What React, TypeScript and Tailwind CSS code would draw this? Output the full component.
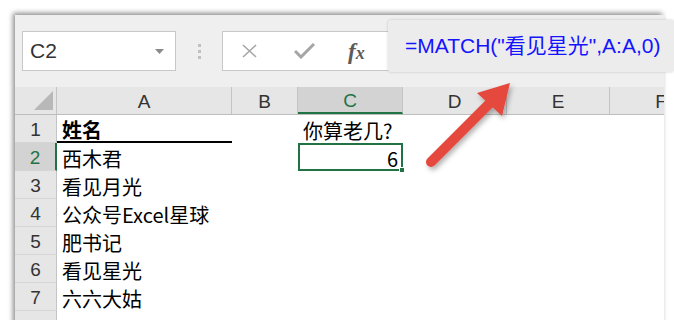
import React from "react";

const cols = [
  { key: "A", w: "w-[175px]" },
  { key: "B", w: "w-[66px]" },
  { key: "C", w: "w-[105px]" },
  { key: "D", w: "w-[104px]" },
  { key: "E", w: "w-[103px]" },
  { key: "F", w: "w-[103px]" },
];

const names = ["西木君", "看见月光", "公众号Excel星球", "肥书记", "看见星光", "六六大姑"];

const latin = "font-['Liberation_Sans','Noto_Sans_CJK_SC',sans-serif]";
const cjk = "font-['Noto_Sans_CJK_SC',sans-serif]";

function RowHead({ n, active }: { n: number; active?: boolean }) {
  return (
    <div
      className={`w-[42px] h-[28px] shrink-0 flex items-center justify-center pt-[4px] border-b border-[#d5d5d5] text-[19px] ${latin} ${
        active
          ? "bg-[#d3d3d3] text-[#217346] border-r-2 border-r-[#217346]"
          : "bg-[#e6e6e6] text-[#333] border-r border-r-[#c4c4c4]"
      }`}
    >
      {n}
    </div>
  );
}

export default function App() {
  return (
    <div className="relative w-[674px] h-[320px] overflow-hidden bg-white pl-[15px] pt-[15px]">
      <div className="w-[649px] h-[320px] overflow-hidden bg-[#efefef] shadow-[-2px_-2px_5px_rgba(0,0,0,0.45)] flex flex-col">
        {/* toolbar */}
        <div className="h-[72px] shrink-0 flex items-start pt-[16px] pl-[7px]">
          <div className="w-[154px] h-[40px] shrink-0 bg-white border border-[#c8c8c8] flex items-center justify-between pl-[7px] pr-[11px]">
            <span className={`text-[21px] text-[#333] ${latin}`}>C2</span>
            <svg width="9" height="5" viewBox="0 0 9 5">
              <path d="M0 0h9L4.5 5z" fill="#8a8a8a" />
            </svg>
          </div>
          <div className="w-[46px] h-[40px] shrink-0 flex flex-col items-center justify-center gap-[3px]">
            <span className="w-[3px] h-[3px] bg-[#c0c0c0]" />
            <span className="w-[3px] h-[3px] bg-[#c0c0c0]" />
            <span className="w-[3px] h-[3px] bg-[#c0c0c0]" />
          </div>
          <div className="flex-1 h-[40px] bg-white border border-[#c8c8c8] flex items-center pl-[18px]">
            <svg width="17" height="14" viewBox="0 0 17 14">
              <path d="M2 1l13 12M15 1L2 13" stroke="#a6a6a6" strokeWidth="1.6" fill="none" />
            </svg>
            <svg className="ml-[36px]" width="21" height="16" viewBox="0 0 21 16">
              <path d="M1 8l6 6L20 1" stroke="#a6a6a6" strokeWidth="3" fill="none" />
            </svg>
            <span className="ml-[33px] text-[23px] italic font-bold text-[#5a5a5a] font-['Liberation_Serif',serif] leading-none">
              f<span className="text-[18px]">x</span>
            </span>
          </div>
        </div>

        {/* column headers */}
        <div className="h-[28px] shrink-0 flex border-b border-[#bdbdbd]">
          <div className="w-[42px] shrink-0 bg-[#e6e6e6] border-r border-[#c4c4c4] flex items-end justify-end pr-[3px] pb-[4px]">
            <svg width="19" height="19" viewBox="0 0 19 19">
              <path d="M19 0V19H0z" fill="#b8b8b8" />
            </svg>
          </div>
          {cols.map((c) => (
            <div
              key={c.key}
              className={`${c.w} shrink-0 flex items-center justify-center pt-[3px] text-[19px] ${latin} ${
                c.key === "C"
                  ? "bg-[#d3d3d3] text-[#217346] border-b-2 border-[#217346] border-r border-r-[#c4c4c4]"
                  : "bg-[#e6e6e6] text-[#333] border-r border-[#c4c4c4]"
              }`}
            >
              {c.key}
            </div>
          ))}
        </div>

        {/* row 1 */}
        <div className="h-[28px] shrink-0 flex">
          <RowHead n={1} />
          <div className={`w-[175px] shrink-0 bg-white border-b-2 border-black pl-[5px] pt-[3px] flex items-center text-[20px] font-bold text-black ${cjk}`}>
            姓名
          </div>
          <div className="w-[66px] shrink-0 bg-white" />
          <div className={`w-[105px] shrink-0 bg-white pl-[5px] pt-[4px] flex items-center text-[20px] text-black ${cjk}`}>你算老几?</div>
          <div className="flex-1 bg-white" />
        </div>

        {names.map((name, i) => (
          <div key={name} className="h-[28px] shrink-0 flex">
            <RowHead n={i + 2} active={i === 0} />
            <div className={`w-[175px] shrink-0 bg-white pl-[5px] pt-[4px] flex items-center text-[20px] text-black whitespace-nowrap ${cjk}`}>
              {name}
            </div>
            <div className="w-[66px] shrink-0 bg-white" />
            {i === 0 ? (
              <div className={`relative w-[105px] shrink-0 bg-white border-2 border-[#217346] flex items-center justify-end pr-[3px] pt-[3px] text-[20px] text-black ${cjk}`}>
                6
                <span className="absolute right-[-4px] bottom-[-4px] w-[6px] h-[6px] bg-[#217346] border border-white" />
              </div>
            ) : (
              <div className="w-[105px] shrink-0 bg-white" />
            )}
            <div className="flex-1 bg-white" />
          </div>
        ))}

        <div className="h-[28px] shrink-0 flex">
          <div className="w-[42px] shrink-0 bg-[#e6e6e6] border-r border-[#c4c4c4]" />
          <div className="flex-1 bg-white" />
        </div>
      </div>

      {/* formula callout */}
      <div className="absolute left-[388px] top-[20px] w-[286px] h-[52px] bg-[#ececec] rounded-[3px] shadow-[0_0_3px_rgba(0,0,0,0.18)] flex items-center pl-[17px]">
        <span className={`text-[21px] text-[#1414ff] whitespace-nowrap ${latin}`}>=MATCH("看见星光",A:A,0)</span>
      </div>

      {/* red arrow */}
      <svg className="absolute left-0 top-0" width="674" height="320" viewBox="0 0 674 320">
        <defs>
          <filter id="sh" x="-20%" y="-20%" width="140%" height="140%">
            <feDropShadow dx="2" dy="3" stdDeviation="2.5" floodColor="#000" floodOpacity="0.3" />
          </filter>
        </defs>
        <g filter="url(#sh)">
          <line x1="431" y1="162" x2="492" y2="101" stroke="#e5483d" strokeWidth="10" strokeLinecap="round" />
          <path d="M510 83L477 93L502 116z" fill="#e5483d" />
        </g>
      </svg>
    </div>
  );
}
